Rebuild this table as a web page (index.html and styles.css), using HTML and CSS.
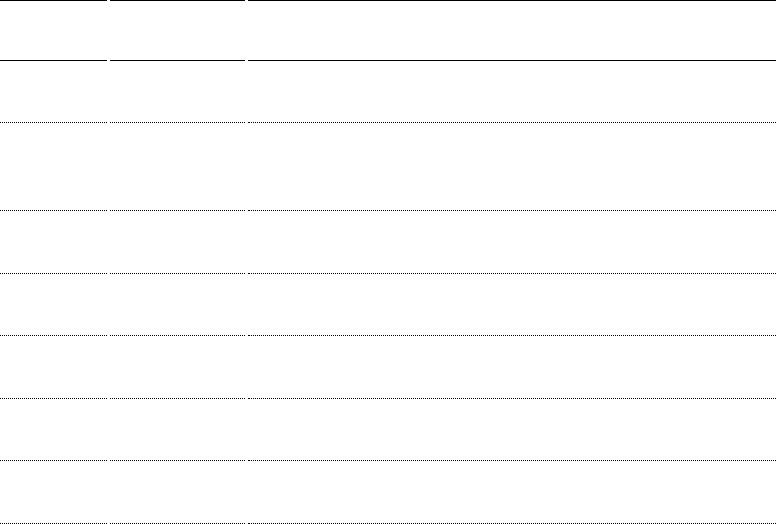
FILE: index.html
```html
<!DOCTYPE html>
<html lang="en">
<head>
    <meta charset="UTF-8">
    <meta name="viewport" content="width=device-width, initial-scale=1.0">
    <title>Table</title>
    <link rel="stylesheet" href="styles.css">
</head>
<body>
    <div class="grid">
        <div class="head"></div>
        <div class="head"></div>
        <div class="head"></div>

        <div class="cell"></div>
        <div class="cell"></div>
        <div class="cell"></div>

        <div class="cell"></div>
        <div class="cell"></div>
        <div class="cell"></div>

        <div class="cell"></div>
        <div class="cell"></div>
        <div class="cell"></div>

        <div class="cell"></div>
        <div class="cell"></div>
        <div class="cell"></div>

        <div class="cell"></div>
        <div class="cell"></div>
        <div class="cell"></div>

        <div class="cell"></div>
        <div class="cell"></div>
        <div class="cell"></div>

        <div class="cell"></div>
        <div class="cell"></div>
        <div class="cell"></div>
    </div>
</body>
</html>
```

FILE: styles.css
```css
body {
    font-family: "Liberation Sans", Arial, sans-serif;
    background-color: #ffffff;
    margin: 0;
    padding: 0;
}

.grid {
    display: grid;
    grid-template-columns: 107px 135px 1fr;
    grid-template-rows: 61px 62px 88px 63px 62px 63px 62px 63px;
    column-gap: 3px;
}

.head {
    box-sizing: border-box;
    border-top: 1px solid #000;
    border-bottom: 1px solid #000;
}

.cell {
    box-sizing: border-box;
    border-bottom: 1px dotted #000;
}
```
